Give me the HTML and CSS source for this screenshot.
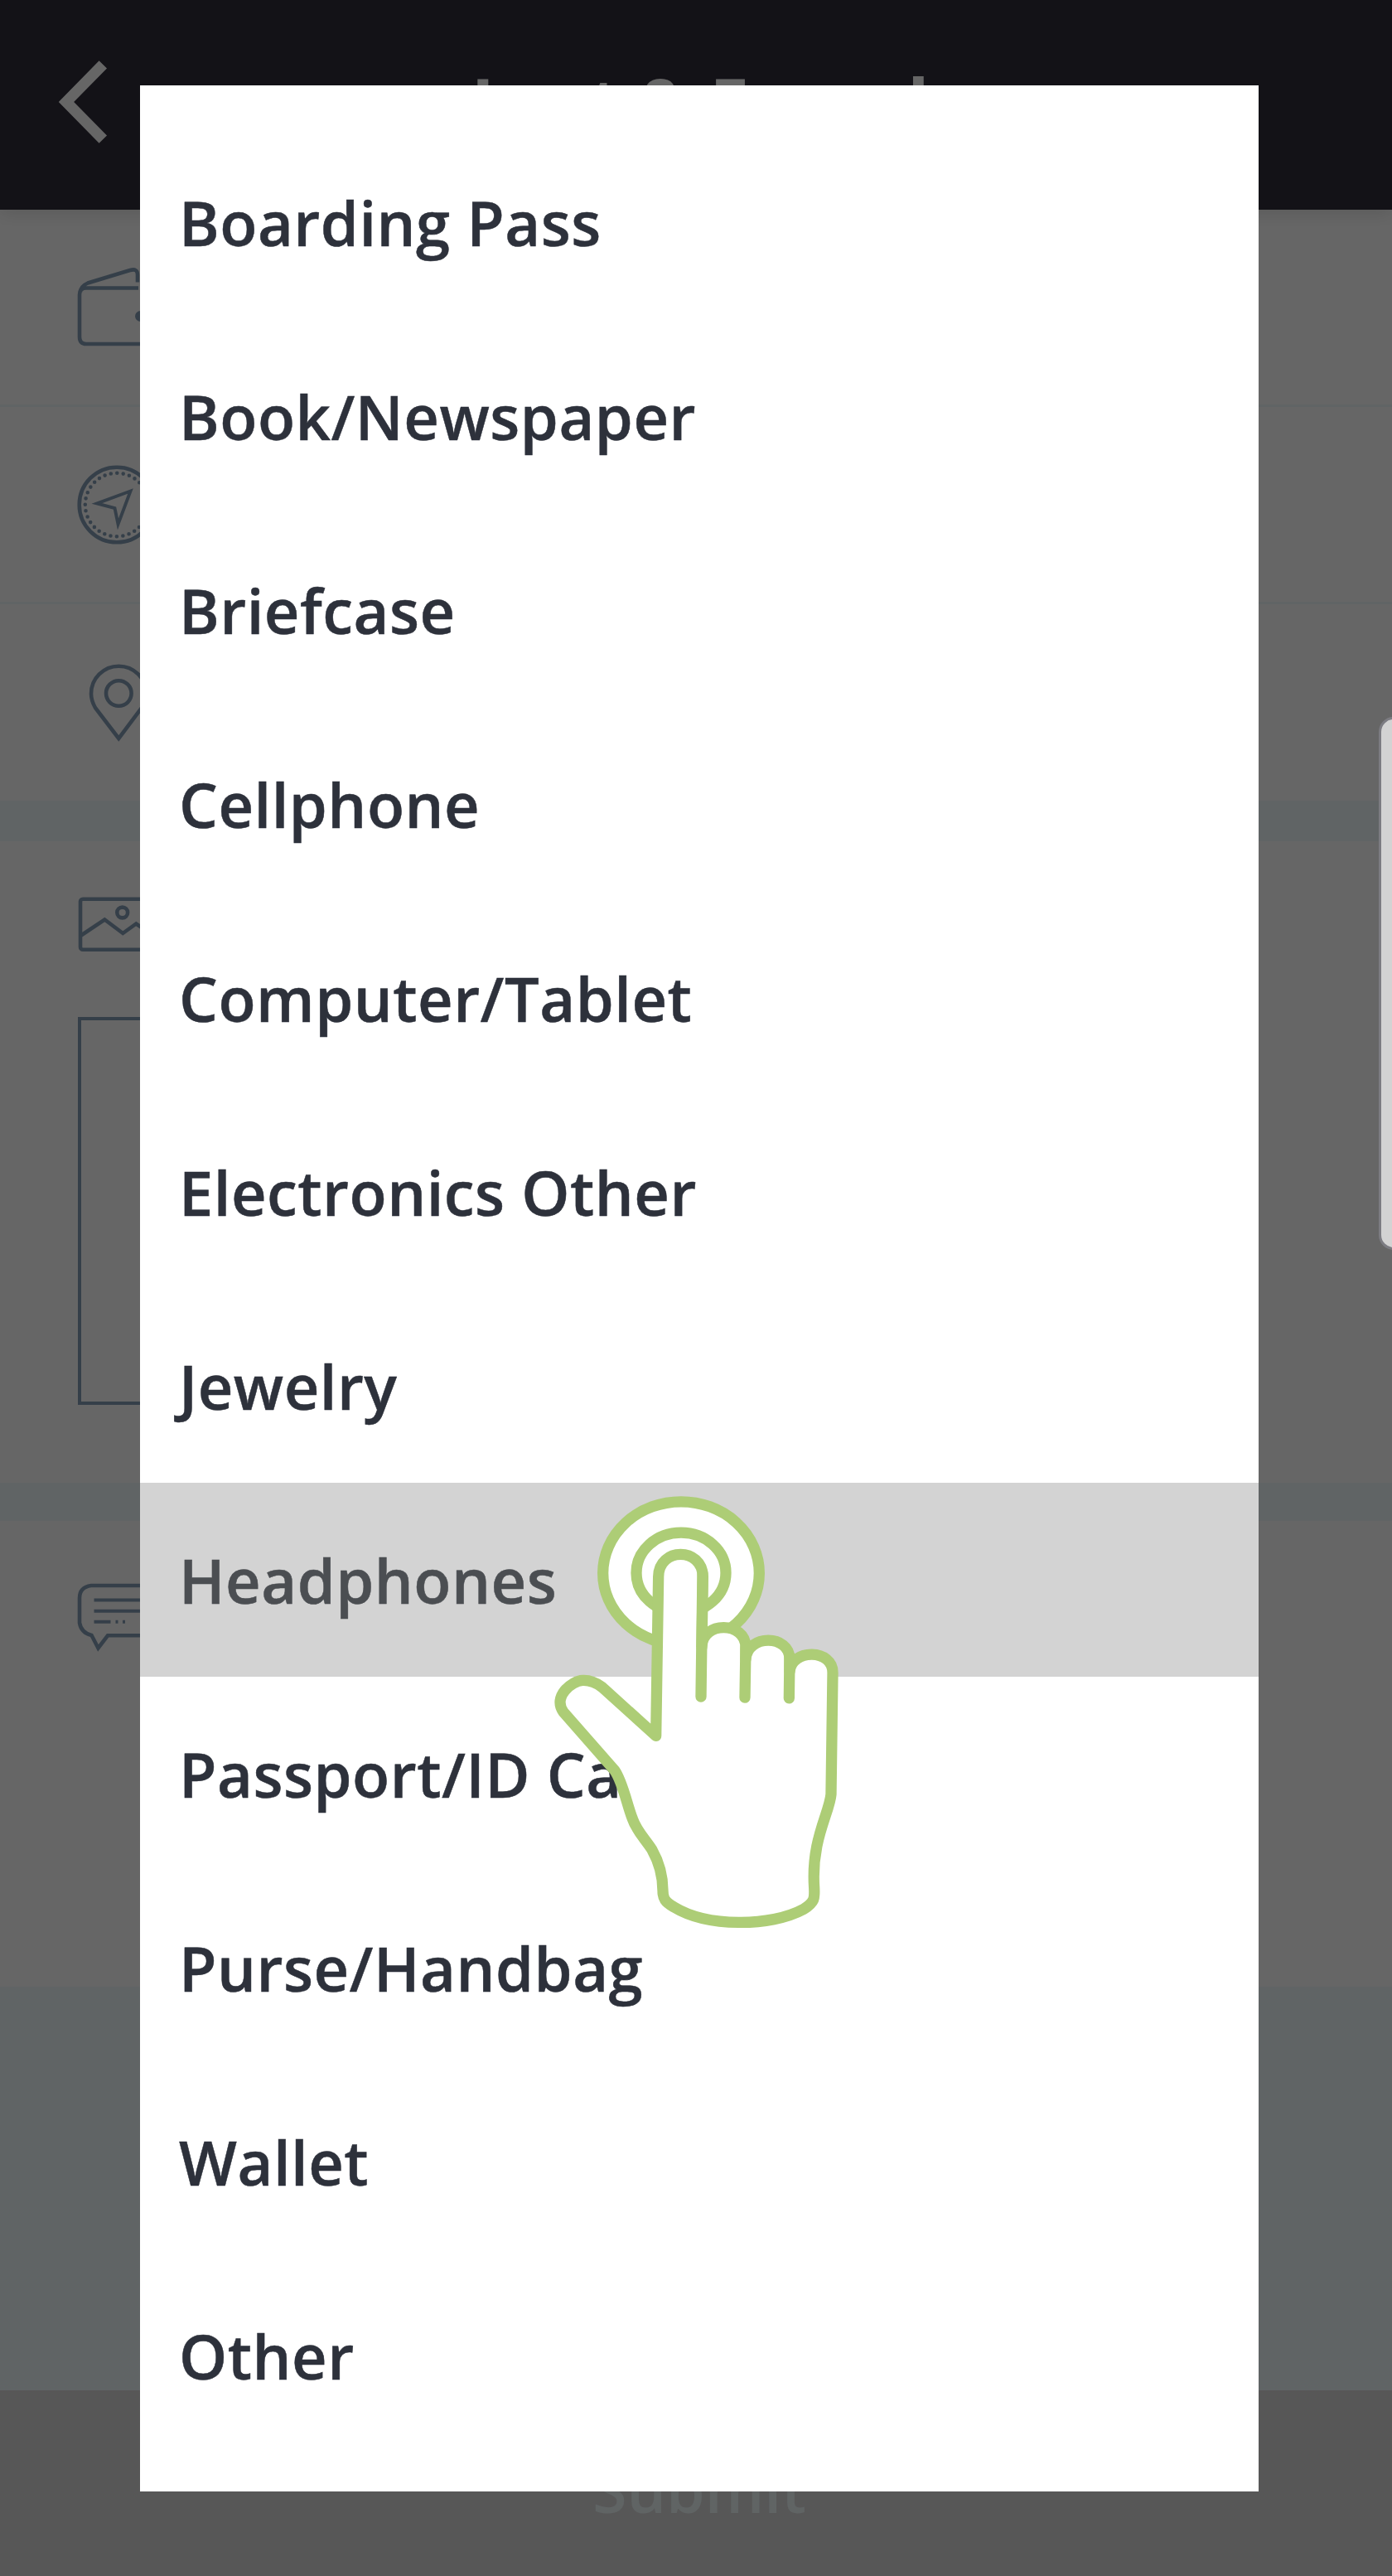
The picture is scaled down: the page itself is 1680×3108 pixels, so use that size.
FILE: index.html
```html
<!DOCTYPE html>
<html lang="en">
<head>
<meta charset="utf-8">
<title>Lost &amp; Found</title>
<link rel="stylesheet" href="styles.css">
</head>
<body>
<div class="screen">
  <header class="header">
    <svg class="back" width="68" height="100" viewBox="0 0 68 100"><path d="M60.300 4.800 16 50 60.300 95.200"/></svg>
    <h1 class="title">Lost &amp; Found</h1>
  </header>
  <main class="form">
    <div class="row">
      <svg class="icon" width="100" height="100" viewBox="92 320.500 100 100">
        <path d="M167 347H104Q96 347 96 355V406Q96 414.500 104 414.500H184M97 352Q97 345 106 341L157 325.500Q166 323 166 331V340"/>
        <circle class="solid" cx="169.500" cy="381" r="6.500"/>
      </svg>
    </div>
    <div class="row">
      <svg class="icon" width="100" height="100" viewBox="92 558.500 100 100">
        <circle cx="141" cy="608.500" r="45.300"/>
        <circle class="dots" cx="141" cy="608.500" r="38.200"/>
        <path class="thin" d="M157.500 592 117 607 138.500 612.500 142.500 632Z"/>
      </svg>
    </div>
    <div class="row row-last">
      <svg class="icon" width="100" height="100" viewBox="92 797 100 100">
        <path d="M143.300 890 115 853Q110 844 110 836A33.300 33.300 0 0 1 176.600 836Q176.600 844 171 853Z"/>
        <circle cx="143.300" cy="835.500" r="15.300"/>
      </svg>
    </div>
    <section class="photos">
      <svg class="icon" width="100" height="70" viewBox="92 1080 100 70">
        <rect x="97" y="1084.700" width="90" height="61" rx="3"/>
        <circle cx="147.700" cy="1101" r="6.400"/>
        <path d="M98 1128.500 126.300 1109.500 148.300 1126 164.300 1114.500 187 1130"/>
      </svg>
      <div class="photo-box"></div>
    </section>
    <section class="comments">
      <svg class="icon" width="100" height="90" viewBox="92 1905 100 90">
        <path d="M180 1913H110Q96 1915 96 1928V1958Q98 1970 110.500 1973L118.500 1988.500 130 1973.300H180"/>
        <path class="thin" d="M113.500 1930.500H175M113.500 1943.800H175M113.500 1956.700H133.500M139.500 1956.700H142.500M148 1956.700H151"/>
      </svg>
    </section>
  </main>
  <footer class="submit">Submit</footer>

  <div class="overlay">
    <ul class="dialog">
      <li>Boarding Pass</li>
      <li>Book/Newspaper</li>
      <li>Briefcase</li>
      <li>Cellphone</li>
      <li>Computer/Tablet</li>
      <li>Electronics Other</li>
      <li>Jewelry</li>
      <li class="pressed">Headphones</li>
      <li>Passport/ID Card</li>
      <li>Purse/Handbag</li>
      <li>Wallet</li>
      <li>Other</li>
    </ul>
  </div>
  <div class="edge-handle"></div>
  <svg class="tap" viewBox="0 0 1260 1568" preserveAspectRatio="none">
    <ellipse cx="546" cy="319" rx="283" ry="233"/>
    <ellipse cx="546" cy="318" rx="162" ry="131"/>
    <path d="M455 850 464 330C466 234 622 234 625 330L621 560C621 475 779 475 780 560L780 600C785 518 940 518 939 600V640C945 565 1097 565 1095 645L1089 1040C1084 1100 1016 1190 1028 1345C1030 1380 1030 1392 990 1415C870 1474 640 1474 520 1408C488 1392 480 1380 480 1355C480 1310 465 1260 440 1220C415 1185 385 1160 370 1120C350 1075 335 1000 305 962L120 772C80 722 150 670 190 669C215 668 235 674 260 691Z"/>
    <path d="M624 320 618 722M780 560 777 725M939 595 937 727"/>
  </svg>
</div>
</body>
</html>
```
FILE: styles.css
```css
* { box-sizing: border-box; }
body { margin: 0; font-family: "Open Sans", "Noto Sans", sans-serif; }

.screen {
  position: relative;
  display: flex;
  flex-direction: column;
  width: 1680px;
  height: 3108px;
  overflow: hidden;
  background: #f1fafc;
}

.header {
  position: relative;
  display: flex;
  align-items: center;
  height: 253px;
  flex: none;
  padding: 0 122px 7px 64px;
  background: #302d3a;
  color: #fff;
  box-shadow: 0 2px 22px rgba(0, 0, 0, .14);
  z-index: 1;
}
.back { flex: none; fill: none; stroke: #fff; stroke-width: 13.200; }
.title { flex: 1; margin: 0; text-align: center; font-size: 85px; font-weight: 700; line-height: 1; }

.form { flex: none; height: 2144px; background: #fff; }
.row {
  display: flex;
  align-items: center;
  height: 238px;
  padding-left: 92px;
  border-bottom: 3px solid #f1fafc;
}
.row-last { height: 237px; border: 0; }
.icon { display: block; flex: none; fill: none; stroke: #869fb6; stroke-width: 4.600; }
.thin { stroke-width: 3.900; }
.solid { fill: #869fb6; stroke: none; }
.dots { stroke-linecap: round; stroke-dasharray: 0 7.500; }

.photos {
  height: 869px;
  padding: 65px 92px 0 92px;
  border-top: 49px solid #f1fafc;
  border-bottom: 46px solid #f1fafc;
}
.photo-box { width: 468px; height: 468px; margin: 77px 0 0 2px; border: 4px solid #869fb6; }
.comments { padding: 70px 92px; }

.submit {
  height: 224px;
  margin-top: auto;
  padding: 68px 0 0 8px;
  background: #d9d9d9;
  color: #eff9fb;
  text-align: center;
  font-size: 75px;
  font-weight: 600;
  line-height: 102px;
}

.overlay {
  position: absolute;
  inset: 0;
  z-index: 2;
  padding: 103px 161px 102px 169px;
  background: rgba(0, 0, 0, .6);
}
.dialog {
  height: 2903px;
  margin: 0;
  padding: 48px 0;
  list-style: none;
  background: #fff;
  color: #2d313b;
  font-size: 74px;
  font-weight: 600;
  letter-spacing: .5px;
  -webkit-text-stroke: .5px currentColor;
}
.dialog li { height: 234px; padding: 0 47px; line-height: 236px; }
.dialog .pressed { background: #d3d3d3; color: #4b4e52; }

.edge-handle {
  position: absolute;
  z-index: 3;
  top: 865px;
  right: -20px;
  width: 36px;
  height: 643px;
  border: 3.500px solid #7c7c82;
  border-radius: 18px;
  background: #d3d3d3;
}

.tap {
  position: absolute;
  z-index: 4;
  left: 640px;
  top: 1780px;
  width: 420px;
  height: 580px;
  fill: #fff;
  stroke: #adcd76;
  stroke-width: 13.300px;
  stroke-linejoin: round;
  stroke-linecap: round;
}
.tap * { vector-effect: non-scaling-stroke; }
```
